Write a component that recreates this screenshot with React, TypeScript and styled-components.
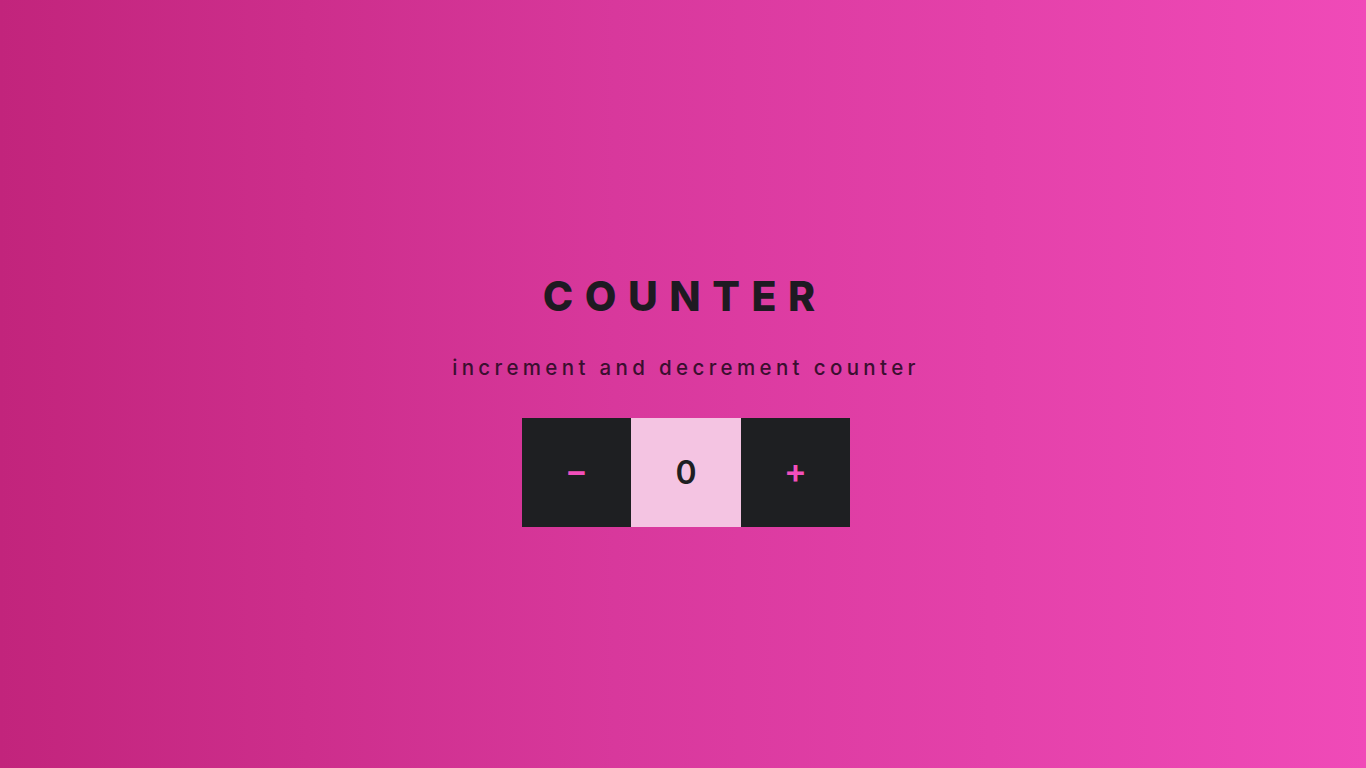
import React, { useState } from "react";
import styled, { createGlobalStyle } from "styled-components";

const Global = createGlobalStyle`
  html, body { margin: 0; padding: 0; }
  body {
    font-family: Inter, "DejaVu Sans", sans-serif;
    background: linear-gradient(90deg, #c2247c 0%, #d8389c 45%, #f04ab8 100%);
    min-height: 100vh;
  }
`;

const Page = styled.main`
  height: 768px;
  display: flex;
  flex-direction: column;
  align-items: center;
  padding-top: 272px;
  box-sizing: border-box;
`;

const Title = styled.h1`
  margin: 0 -3.5px 0 0;
  font-family: Inter, sans-serif;
  font-weight: 800;
  font-size: 41px;
  line-height: 48px;
  letter-spacing: 11.5px;
  color: #1e1a22;
`;

const Subtitle = styled.p`
  margin: 36px -6px 0 0;
  font-family: Inter, sans-serif;
  font-weight: 500;
  font-size: 20.5px;
  line-height: 24px;
  letter-spacing: 4.35px;
  color: #3b0f30;
`;

const Counter = styled.div`
  margin-top: 38px;
  margin-left: 6px;
  display: flex;
`;

const Button = styled.button`
  width: 109px;
  height: 109px;
  border: none;
  background: #1e1f22;
  color: #f24fbc;
  font-family: Inter, sans-serif;
  font-size: 34px;
  font-weight: 600;
  display: flex;
  align-items: center;
  justify-content: center;
  cursor: pointer;
  padding: 0 0 5px;
`;

const Value = styled.div`
  width: 110px;
  height: 109px;
  background: #f4c4e2;
  color: #1e1f22;
  font-family: Inter, sans-serif;
  font-size: 32px;
  font-weight: 600;
  display: flex;
  align-items: center;
  justify-content: center;
`;

export default function App() {
  const [count, setCount] = useState(0);
  return (
    <>
      <Global />
      <Page>
        <Title>COUNTER</Title>
        <Subtitle>increment and decrement counter</Subtitle>
        <Counter>
          <Button onClick={() => setCount((c) => c - 1)}>−</Button>
          <Value>{count}</Value>
          <Button onClick={() => setCount((c) => c + 1)}>+</Button>
        </Counter>
      </Page>
    </>
  );
}
